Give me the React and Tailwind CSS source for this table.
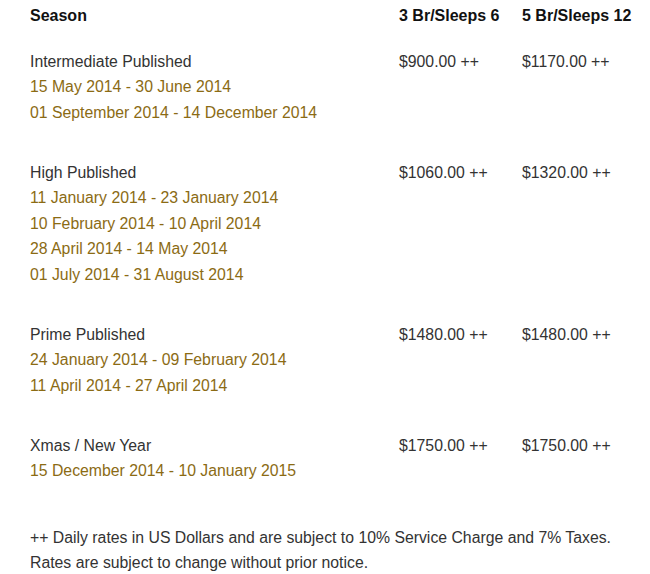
import React from "react";

const seasons = [
  {
    name: "Intermediate Published",
    dates: ["15 May 2014 - 30 June 2014", "01 September 2014 - 14 December 2014"],
    small: "$900.00 ++",
    large: "$1170.00 ++",
  },
  {
    name: "High Published",
    dates: [
      "11 January 2014 - 23 January 2014",
      "10 February 2014 - 10 April 2014",
      "28 April 2014 - 14 May 2014",
      "01 July 2014 - 31 August 2014",
    ],
    small: "$1060.00 ++",
    large: "$1320.00 ++",
  },
  {
    name: "Prime Published",
    dates: ["24 January 2014 - 09 February 2014", "11 April 2014 - 27 April 2014"],
    small: "$1480.00 ++",
    large: "$1480.00 ++",
  },
  {
    name: "Xmas / New Year",
    dates: ["15 December 2014 - 10 January 2015"],
    small: "$1750.00 ++",
    large: "$1750.00 ++",
  },
];

const App = () => {
  return (
    <div
      className="bg-white text-[#333] text-[15.8px] leading-[25.5px] pl-[30px] pt-[3px] min-h-[574px]"
      style={{ fontFamily: '"Liberation Sans", Arial, sans-serif' }}
    >
      {/* header */}
      <div className="grid grid-cols-[369px_123px_auto] font-bold text-[16px] text-[#111]">
        <div>Season</div>
        <div>3 Br/Sleeps 6</div>
        <div>5 Br/Sleeps 12</div>
      </div>

      {/* rows */}
      <div className="flex flex-col gap-[34.5px] mt-[20px]">
        {seasons.map((s) => (
          <div key={s.name} className="grid grid-cols-[369px_123px_auto]">
            <div>
              <div>{s.name}</div>
              {s.dates.map((d) => (
                <div key={d} className="text-[#8b6b14]">
                  {d}
                </div>
              ))}
            </div>
            <div>{s.small}</div>
            <div>{s.large}</div>
          </div>
        ))}
      </div>

      {/* footnote */}
      <div className="mt-[41px]">
        <p>++ Daily rates in US Dollars and are subject to 10% Service Charge and 7% Taxes.</p>
        <p>Rates are subject to change without prior notice.</p>
      </div>
    </div>
  );
};

export default App;
